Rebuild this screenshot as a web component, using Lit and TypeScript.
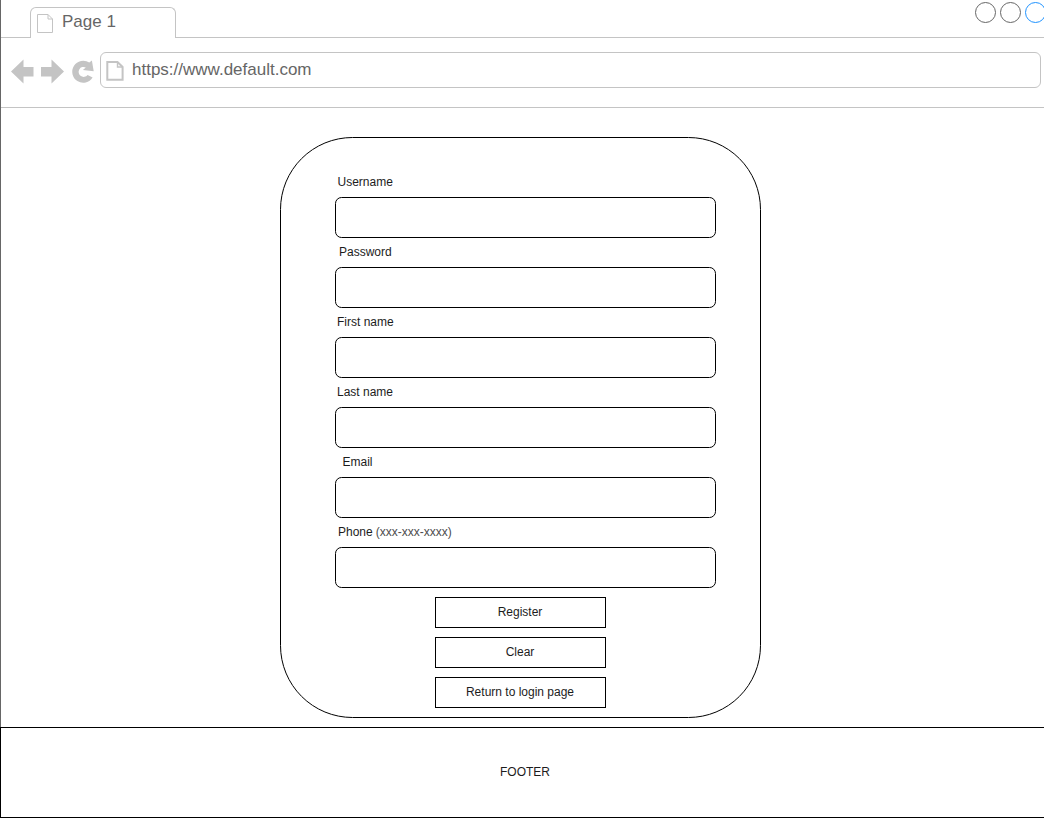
import { LitElement, html, css, svg } from "lit";
import { customElement } from "lit/decorators.js";

interface Field {
  label: string;
  hint?: string;
  indent: number;
}

const FIELDS: Field[] = [
  { label: "Username", indent: 2.5 },
  { label: "Password", indent: 4 },
  { label: "First name", indent: 2 },
  { label: "Last name", indent: 2 },
  { label: "Email", indent: 7.5 },
  { label: "Phone", hint: "(xxx-xxx-xxxx)", indent: 3 },
];

const ACTIONS = ["Register", "Clear", "Return to login page"];

@customElement("browser-chrome")
export class BrowserChrome extends LitElement {
  static styles = css`
    :host { display: block; color: #666; font-size: 17px; }
    svg { display: block; flex: none; }
    .strip { display: flex; height: 38px; align-items: flex-end; overflow: hidden; }
    .line { box-sizing: border-box; height: 1px; background: #c4c4c4; }
    .lead { width: 29px; }
    .tab {
      box-sizing: border-box; width: 146px; height: 31px; display: flex;
      border: 1px solid #c4c4c4; border-bottom: 0; border-radius: 6px 6px 0 0;
      padding: 5px 0 0 6px;
    }
    .tab span { margin-left: 8px; line-height: 18px; }
    .rest { flex: 1; height: 38px; display: flex; flex-direction: column; justify-content: space-between; align-items: flex-end; }
    .rest .line { width: 100%; }
    .bar {
      box-sizing: border-box; height: 70px; display: flex; padding: 14px 3px 0 9px;
      border-bottom: 1px solid #c4c4c4;
    }
    .url {
      box-sizing: border-box; flex: 1; height: 36px; display: flex;
      border: 1px solid #c4c4c4; border-radius: 6px; padding: 7px 0 0 5px;
    }
    .url span { margin-left: 8px; line-height: 20px; }
  `;

  render() {
    return html`
      <div class="strip">
        <div class="line lead"></div>
        <div class="tab">
          <svg width="17" height="21" viewBox="0 0 17 21" fill="none" stroke="#c4c4c4">
            <path d="M.5 1.5H11L15.5 6V19.5H.5ZM11 1.5V6H15.5" />
          </svg>
          <span>Page 1</span>
        </div>
        <div class="rest">
          <svg width="70" height="26" viewBox="974 0 70 26" fill="none">
            ${[985.5, 1010.5, 1035.5].map(
              (x, i) => svg`<circle cx=${x} cy="12.5" r="10" stroke=${i === 2 ? "#1f93ff" : "#666"} />`
            )}
          </svg>
          <div class="line"></div>
        </div>
      </div>
      <div class="bar">
        <svg width="90" height="36" viewBox="10 52 90 36" fill="#c4c4c4">
          <path d="M11 71.5 23.5 59.5V67H33.5V76.5H23.5V83.5Z" />
          <path d="M64 71.5 51.5 59.5V67H41V76.5H51.5V83.5Z" />
          <path d="M89.3 62.6 91.9 60.6 93.7 71.2 82.9 69.9 85.8 67.4A5 5 0 1 0 87.6 74.9L92.6 77.6A11 11 0 1 1 89.3 62.6Z" />
        </svg>
        <div class="url">
          <svg width="18" height="22" viewBox="0 0 18 22" fill="none" stroke="#c4c4c4" stroke-width="2">
            <path d="M1.3 2H11.5L16.6 7V19.8H1.3Z" /><path d="M11.5 2V7H16.5" stroke-width="1.4" />
          </svg>
          <span>https://www.default.com</span>
        </div>
      </div>
    `;
  }
}

@customElement("register-form")
export class RegisterForm extends LitElement {
  static styles = css`
    :host {
      box-sizing: border-box; display: flex; flex-direction: column; width: 481px; height: 581px;
      border: 1px solid #000; border-radius: 72.5px; padding: 29px 44px 0 54px;
    }
    .label { display: flex; gap: 3px; height: 30px; line-height: 30px; white-space: pre; }
    .hint { color: #4d4d4d; }
    .input { box-sizing: border-box; width: 381px; height: 41px; border: 1px solid #000; border-radius: 6.5px; margin-bottom: -1px; }
    .actions { display: flex; flex-direction: column; gap: 9px; padding: 10px 0 0 100px; }
    .action {
      box-sizing: border-box; width: 171px; height: 31px; border: 1px solid #000;
      padding-right: 1px; line-height: 28px; text-align: center;
    }
  `;

  render() {
    return html`
      ${FIELDS.map(
        (f) => html`
          <div class="label" style="padding-left:${f.indent}px">
            <span>${f.label}</span>${f.hint ? html`<span class="hint">${f.hint}</span>` : ""}
          </div>
          <div class="input"></div>
        `
      )}
      <div class="actions">${ACTIONS.map((a) => html`<div class="action">${a}</div>`)}</div>
    `;
  }
}

@customElement("app-root")
export class AppRoot extends LitElement {
  static styles = css`
    :host {
      box-sizing: border-box; display: flex; flex-direction: column; width: 1044px; height: 818px;
      overflow: hidden; background: #fff; color: #1c1c1c;
      font: 12px "Liberation Sans", Arial, Helvetica, sans-serif;
    }
    .window { box-sizing: border-box; height: 727px; border-left: 1px solid #666; }
    .content { padding: 29px 0 0 279px; }
    .footer {
      box-sizing: border-box; height: 91px; border: 1px solid #000; border-right: 0;
      padding-left: 5px; text-align: center; line-height: 88px;
    }
  `;

  render() {
    return html`
      <div class="window">
        <browser-chrome></browser-chrome>
        <div class="content"><register-form></register-form></div>
      </div>
      <div class="footer">FOOTER</div>
    `;
  }
}
